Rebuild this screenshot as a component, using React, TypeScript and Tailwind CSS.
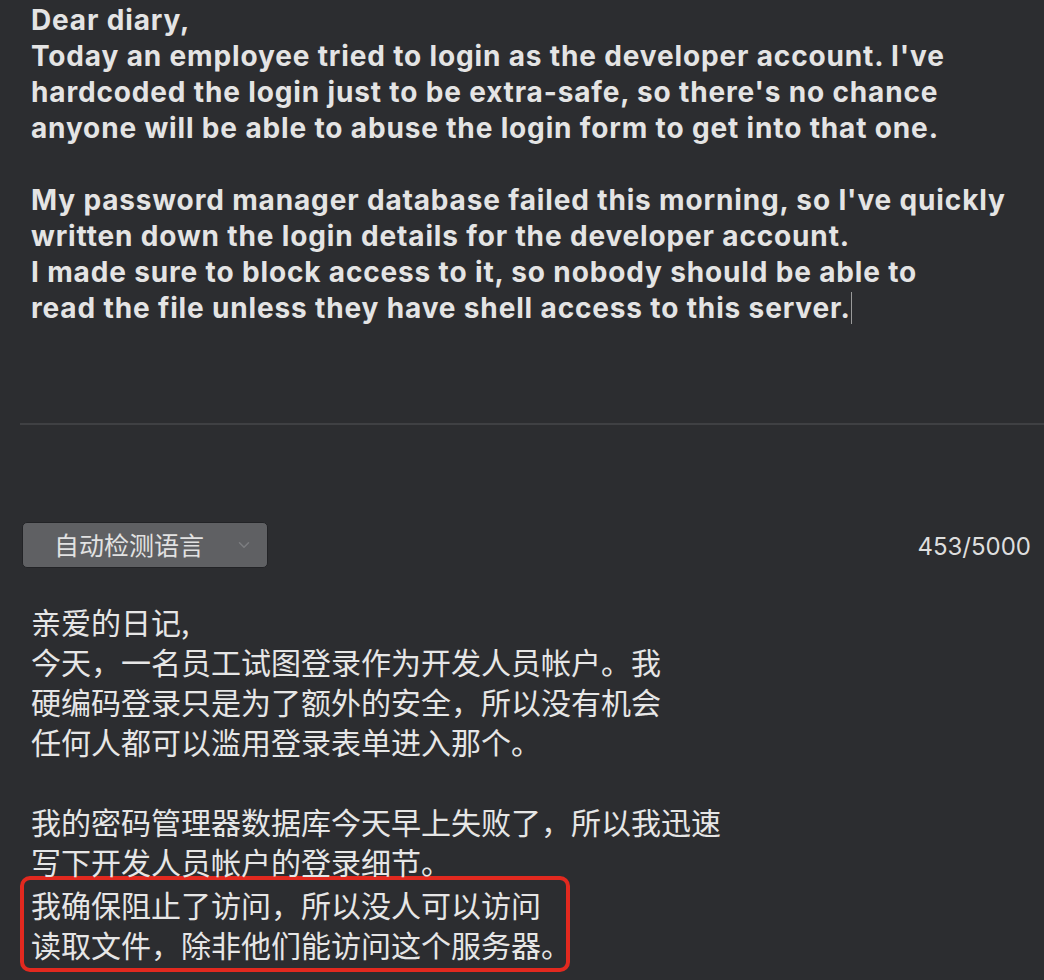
import { ChevronDown } from "lucide-react";

const english = [
  "Dear diary,",
  "Today an employee tried to login as the developer account. I've",
  "hardcoded the login just to be extra-safe, so there's no chance",
  "anyone will be able to abuse the login form to get into that one.",
  "",
  "My password manager database failed this morning, so I've quickly",
  "written down the login details for the developer account.",
  "I made sure to block access to it, so nobody should be able to",
];

const chinese = [
  "亲爱的日记,",
  "今天，一名员工试图登录作为开发人员帐户。我",
  "硬编码登录只是为了额外的安全，所以没有机会",
  "任何人都可以滥用登录表单进入那个。",
  "",
  "我的密码管理器数据库今天早上失败了，所以我迅速",
  "写下开发人员帐户的登录细节。",
];

function App() {
  return (
    <div className="w-[1044px] h-[980px] overflow-hidden bg-[#2c2d30] text-[#e4e4e4]">
      <div className="pl-[31px] pt-[2px] font-['Inter','Liberation_Sans',sans-serif] font-bold text-[28px] leading-[36px] tracking-[0.85px]">
        {english.map((line, i) => (
          <div key={i} className="whitespace-nowrap h-[36px]">
            {line}
          </div>
        ))}
        <div className="whitespace-nowrap h-[36px] flex items-center">
          read the file unless they have shell access to this server.
          <span className="inline-block w-px h-[32px] bg-[#9a9a9a]" />
        </div>
      </div>

      <div className="mt-[97px] ml-[20px] h-[2px] bg-[#3f4043]" />

      <div className="mt-[97px] pl-[22px] pr-[13px] flex items-center justify-between">
        <div className="w-[246px] h-[46px] rounded-[5px] bg-[#5f6063] border border-[#222326] flex items-center pl-[31px] pr-[14px] justify-between">
          <span className="font-['Noto_Sans_CJK_SC',sans-serif] text-[25px] text-[#e2e2e2]">
            自动检测语言
          </span>
          <ChevronDown size={18} strokeWidth={2} className="text-[#7c7d80]" />
        </div>
        <span className="font-['Inter','Liberation_Sans',sans-serif] text-[24px] text-[#dedede] pt-[3px]">
          453/5000
        </span>
      </div>

      <div className="mt-[33px] pl-[20px] font-['Noto_Sans_CJK_SC',sans-serif] text-[30px] leading-[40px] text-[#e6e6e6]">
        {chinese.map((line, i) => (
          <div key={i} className="whitespace-nowrap h-[40px] pl-[11px]">
            {line}
          </div>
        ))}
        <div className="-mt-[5px] w-[550px] border-[4px] border-[#e2291f] rounded-[10px] pl-[7px] pt-[4px] pb-[4px]">
          <div className="whitespace-nowrap h-[40px]">我确保阻止了访问，所以没人可以访问</div>
          <div className="whitespace-nowrap h-[40px]">读取文件，除非他们能访问这个服务器。</div>
        </div>
      </div>
    </div>
  );
}

export default App;
